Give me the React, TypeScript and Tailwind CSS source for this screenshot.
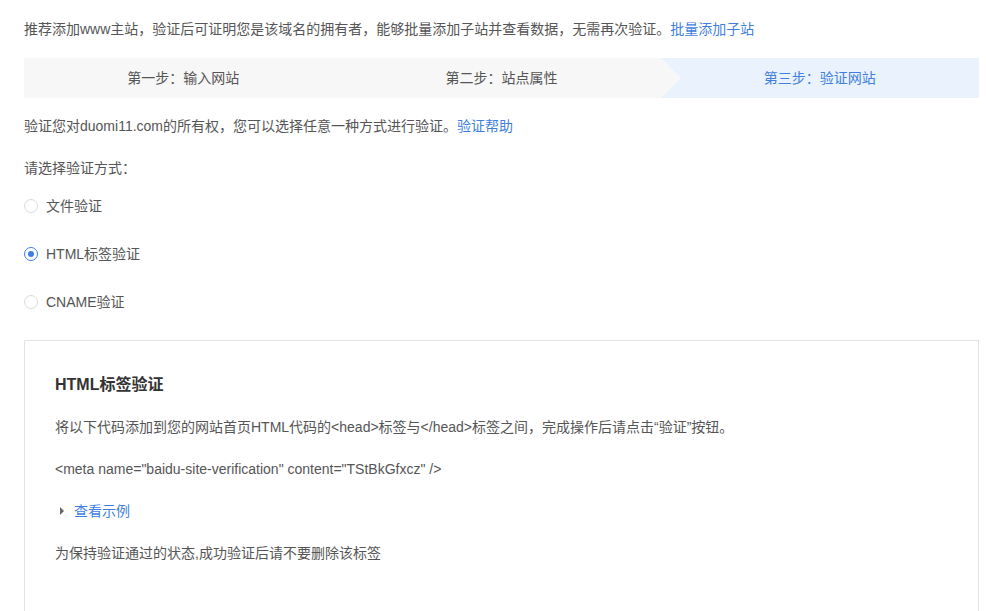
const font = { fontFamily: '"Liberation Sans", "Noto Sans CJK SC", sans-serif' };

type Method = { id: string; label: string };

const methods: Method[] = [
  { id: "file", label: "文件验证" },
  { id: "html", label: "HTML标签验证" },
  { id: "cname", label: "CNAME验证" },
];

function Radio({ checked }: { checked: boolean }) {
  return (
    <span
      className={[
        "flex h-[14px] w-[14px] shrink-0 items-center justify-center rounded-full border bg-white",
        checked ? "border-[#3f7fe0]" : "border-[#dcdcdc]",
      ].join(" ")}
    >
      {checked ? <span className="h-[6px] w-[6px] rounded-full bg-[#3f7fe0]" /> : null}
    </span>
  );
}

function Steps() {
  return (
    <div className="mt-[19px] flex h-[40px] text-[14px] text-[#555]">
      <div className="flex flex-1 items-center justify-center bg-[#f7f7f7]">第一步：输入网站</div>
      <div className="relative z-10 flex flex-1 items-center justify-center bg-[#f7f7f7]">
        第二步：站点属性
        <span className="absolute left-full top-0 h-0 w-0 border-y-[20px] border-l-[20px] border-y-transparent border-l-[#f7f7f7]" />
      </div>
      <div className="flex flex-1 items-center justify-center bg-[#eaf2fd] text-[#3f7fe0]">第三步：验证网站</div>
    </div>
  );
}

export default function App() {
  return (
    <div className="min-h-[611px] bg-white pl-[24px] pr-[7px] pt-[19px] text-[14px] leading-[20px] text-[#555]" style={font}>
      <p>
        推荐添加www主站，验证后可证明您是该域名的拥有者，能够批量添加子站并查看数据，无需再次验证。
        <a className="text-[#3f7fe0]">批量添加子站</a>
      </p>

      <Steps />

      <p className="mt-[18px]">
        验证您对duomi11.com的所有权，您可以选择任意一种方式进行验证。<a className="text-[#3f7fe0]">验证帮助</a>
      </p>

      <p className="mt-[22px]">请选择验证方式：</p>

      <div className="mt-[18px] flex flex-col gap-[28px]">
        {methods.map((m) => (
          <label key={m.id} className="flex items-center gap-[8px]">
            <Radio checked={m.id === "html"} />
            <span>{m.label}</span>
          </label>
        ))}
      </div>

      <div className="mt-[28px] h-[300px] border border-[#e3e3e3] px-[30px] pt-[32px]">
        <h3 className="text-[16px] font-bold leading-[24px] text-[#333]">HTML标签验证</h3>
        <p className="mt-[20px]">
          将以下代码添加到您的网站首页HTML代码的&lt;head&gt;标签与&lt;/head&gt;标签之间，完成操作后请点击“验证”按钮。
        </p>
        <p className="mt-[22px]">&lt;meta name="baidu-site-verification" content="TStBkGfxcz" /&gt;</p>
        <div className="mt-[22px] flex items-center">
          <span className="ml-[5px] h-0 w-0 border-y-[4px] border-l-[4px] border-y-transparent border-l-[#666]" />
          <a className="ml-[10px] text-[#3f7fe0]">查看示例</a>
        </div>
        <p className="mt-[22px]">为保持验证通过的状态,成功验证后请不要删除该标签</p>
      </div>
    </div>
  );
}
